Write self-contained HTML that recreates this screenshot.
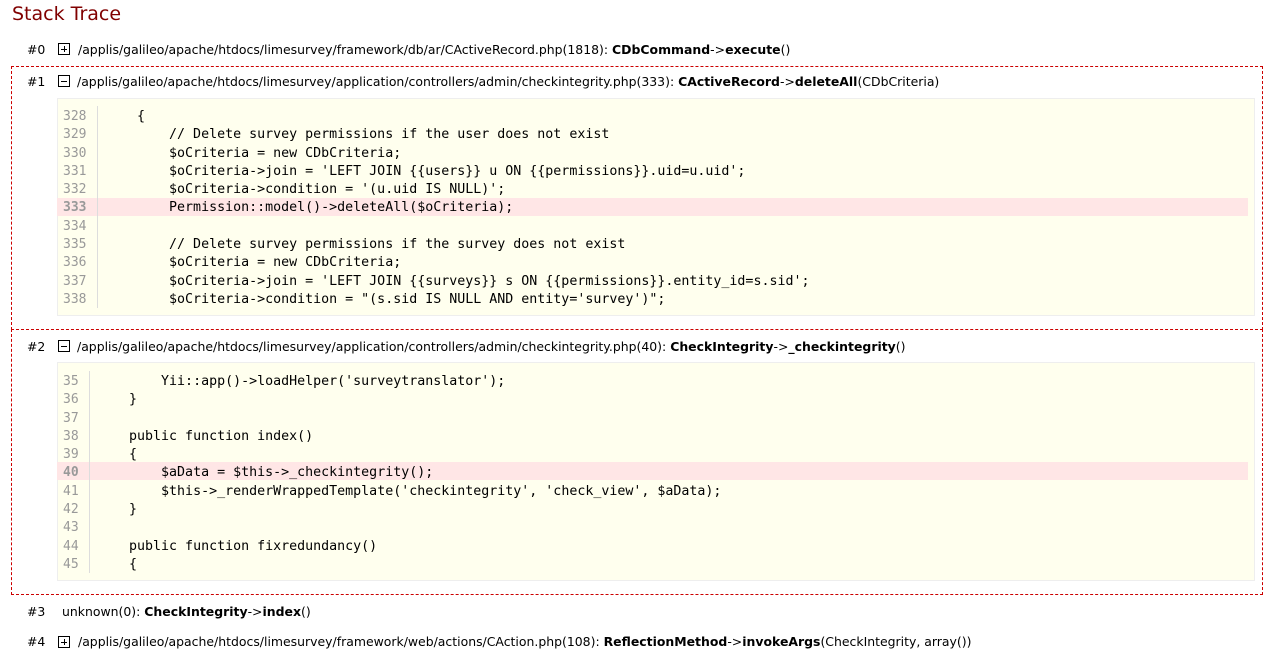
<!DOCTYPE html>
<html><head><meta charset="utf-8"><style>
body{margin:0;background:#fff;width:1273px;height:655px;overflow:hidden;position:relative;font-family:"DejaVu Sans","Liberation Sans",sans-serif;font-size:12.45px;color:#000}
.a{position:absolute;white-space:pre}
h1{position:absolute;left:12px;top:3px;margin:0;font-weight:normal;font-size:19px;color:#800000;font-family:"DejaVu Sans",sans-serif}
.ic{position:absolute;width:10px;height:10px;border:1px solid #000;}
.ic:before{content:"";position:absolute;left:2px;top:4.5px;width:6px;height:1px;background:#000}
.ic.p:after{content:"";position:absolute;left:4.5px;top:2px;width:1px;height:6px;background:#000}
.box{position:absolute;left:11px;width:1250px;border:1px dashed #c00}
.code{position:absolute;left:57px;width:1196px;background:#ffffee;border:1px solid #eee}
.ln{position:absolute;font-family:"DejaVu Sans Mono",monospace;font-size:13px;color:#999;line-height:18.3px;white-space:pre}
.src{position:absolute;font-family:"DejaVu Sans Mono",monospace;font-size:13.3px;line-height:18.3px;white-space:pre}
.gut{position:absolute;width:1px;background:#ddd}
.hl{position:absolute;left:57px;width:1191px;height:18px;background:#ffe6e6}
</style></head><body>
<h1>Stack Trace</h1>
<div class="box" style="top:66px;height:263px;border-bottom:none"></div>
<div class="box" style="top:329px;height:264px"></div>

<div class="a" style="left:27px;top:42px">#0</div>
<div class="ic p" style="left:58px;top:43px"></div>
<div class="a" style="left:78px;top:42px">/applis/galileo/apache/htdocs/limesurvey/framework/db/ar/CActiveRecord.php(1818): <b>CDbCommand</b>-&gt;<b>execute</b>()</div>

<div class="a" style="left:27px;top:74px">#1</div>
<div class="ic" style="left:58px;top:75px"></div>
<div class="a" style="left:77px;top:74px">/applis/galileo/apache/htdocs/limesurvey/application/controllers/admin/checkintegrity.php(333): <b>CActiveRecord</b>-&gt;<b>deleteAll</b>(CDbCriteria)</div>

<div class="code" style="top:98px;height:216px"></div>
<div class="hl" style="top:198px"></div>
<div class="gut" style="left:97px;top:106px;height:202px"></div>
<div class="ln" style="left:63px;top:108px">328
329
330
331
332
<b>333</b>
334
335
336
337
338</div>
<div class="src" style="left:105px;top:108px">    {
        // Delete survey permissions if the user does not exist
        $oCriteria = new CDbCriteria;
        $oCriteria-&gt;join = 'LEFT JOIN {{users}} u ON {{permissions}}.uid=u.uid';
        $oCriteria-&gt;condition = '(u.uid IS NULL)';
        Permission::model()-&gt;deleteAll($oCriteria);

        // Delete survey permissions if the survey does not exist
        $oCriteria = new CDbCriteria;
        $oCriteria-&gt;join = 'LEFT JOIN {{surveys}} s ON {{permissions}}.entity_id=s.sid';
        $oCriteria-&gt;condition = "(s.sid IS NULL AND entity='survey')";</div>

<div class="a" style="left:27px;top:339px">#2</div>
<div class="ic" style="left:58px;top:340px"></div>
<div class="a" style="left:77px;top:339px">/applis/galileo/apache/htdocs/limesurvey/application/controllers/admin/checkintegrity.php(40): <b>CheckIntegrity</b>-&gt;<b>_checkintegrity</b>()</div>

<div class="code" style="top:362px;height:217px"></div>
<div class="hl" style="top:462px"></div>
<div class="gut" style="left:89px;top:371px;height:202px"></div>
<div class="ln" style="left:63px;top:373px">35
36
37
38
39
<b>40</b>
41
42
43
44
45</div>
<div class="src" style="left:97px;top:373px">        Yii::app()-&gt;loadHelper('surveytranslator');
    }

    public function index()
    {
        $aData = $this-&gt;_checkintegrity();
        $this-&gt;_renderWrappedTemplate('checkintegrity', 'check_view', $aData);
    }

    public function fixredundancy()
    {</div>

<div class="a" style="left:27px;top:604px">#3</div>
<div class="a" style="left:62px;top:604px">unknown(0): <b>CheckIntegrity</b>-&gt;<b>index</b>()</div>

<div class="a" style="left:27px;top:634px">#4</div>
<div class="ic p" style="left:58px;top:636px"></div>
<div class="a" style="left:78px;top:634px">/applis/galileo/apache/htdocs/limesurvey/framework/web/actions/CAction.php(108): <b>ReflectionMethod</b>-&gt;<b>invokeArgs</b>(CheckIntegrity, array())</div>
</body></html>
